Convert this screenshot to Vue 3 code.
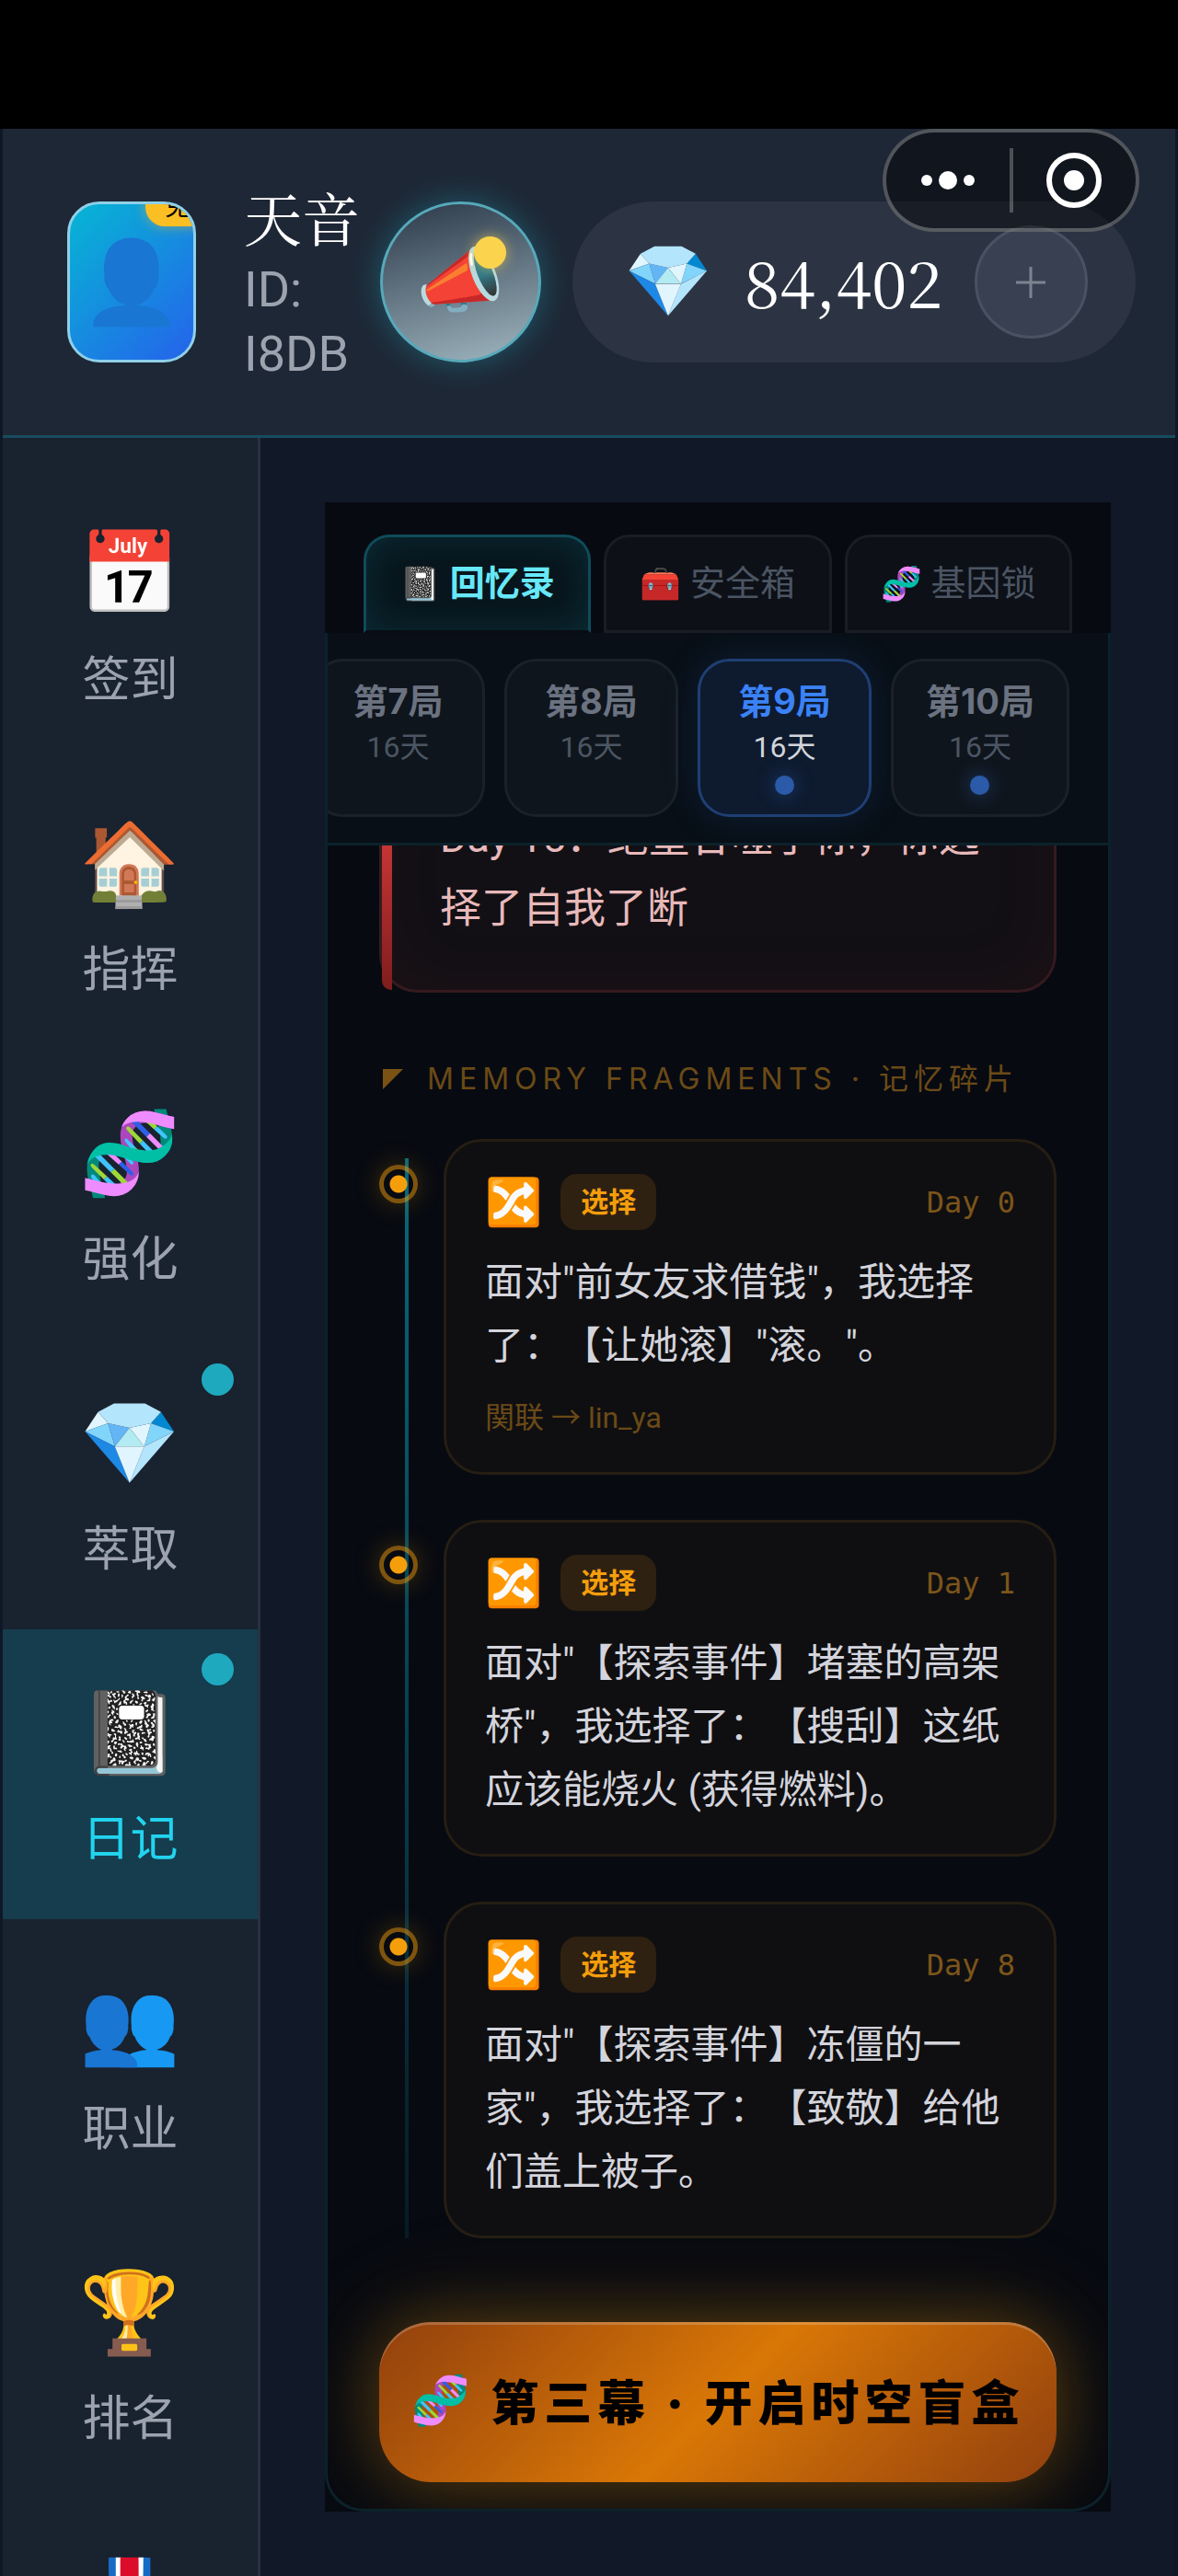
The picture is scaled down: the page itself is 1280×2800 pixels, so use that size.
<script setup>
import { ref } from 'vue';

const menu = [
    { icon: '📅', label: '签到' },
    { icon: '🏠', label: '指挥' },
    { icon: '🧬', label: '强化' },
    { icon: '💎', label: '萃取', dot: true },
    { icon: '📓', label: '日记', dot: true },
    { icon: '👥', label: '职业' },
    { icon: '🏆', label: '排名' },
    { icon: '🎖️', label: '' },
];
const activeMenu = ref('日记');

const tabs = [
    { icon: '📓', label: '回忆录' },
    { icon: '🧰', label: '安全箱' },
    { icon: '🧬', label: '基因锁' },
];
const activeTab = ref('回忆录');

const rounds = [
    { nr: 7, days: 16 },
    { nr: 8, days: 16 },
    { nr: 9, days: 16, dot: true },
    { nr: 10, days: 16, dot: true },
];
const activeRound = ref(9);

const fragments = [
    { day: 0, text: '面对"前女友求借钱"，我选择了：【让她滚】"滚。"。', link: 'lin_ya' },
    { day: 1, text: '面对"【探索事件】堵塞的高架桥"，我选择了：【搜刮】这纸应该能烧火 (获得燃料)。' },
    { day: 8, text: '面对"【探索事件】冻僵的一家"，我选择了：【致敬】给他们盖上被子。' },
];
</script>

<template>
    <div class="screen">
        <div class="statusbar"></div>
        <div class="app">
            <div class="capsule">
                <button class="capsule-btn" aria-label="更多">
                    <svg width="58" height="20" viewBox="0 0 58 20" fill="#fff">
                        <circle cx="6" cy="10" r="6" />
                        <circle cx="29" cy="10" r="10" />
                        <circle cx="52" cy="10" r="6" />
                    </svg>
                </button>
                <span class="capsule-line"></span>
                <button class="capsule-btn" aria-label="关闭">
                    <svg width="60" height="60" viewBox="0 0 60 60">
                        <circle cx="30" cy="30" r="27" fill="none" stroke="#fff" stroke-width="6" />
                        <circle cx="30" cy="30" r="11" fill="#fff" />
                    </svg>
                </button>
            </div>

            <header class="header">
                <div class="avatar">
                    <span class="avatar-icon">👤</span>
                    <span class="avatar-badge">免</span>
                </div>
                <div class="user">
                    <div class="user-name">天音</div>
                    <div class="user-id">ID: I8DB</div>
                </div>
                <button class="horn" aria-label="公告">
                    <span class="horn-icon">📣</span>
                    <span class="horn-dot"></span>
                </button>
                <div class="gems">
                    <span class="gems-icon">💎</span>
                    <span class="gems-value">84,402</span>
                    <button class="gems-add" aria-label="充值">
                        <svg width="32" height="34" viewBox="0 0 32 34" stroke="#7d8491" stroke-width="3">
                            <path d="M16 0V34M0 17H32" />
                        </svg>
                    </button>
                </div>
            </header>

            <div class="body">
                <nav class="sidebar">
                    <button v-for="m in menu" :key="m.icon" class="item" :class="{ active: m.label === activeMenu }"
                        @click="activeMenu = m.label">
                        <span class="item-icon">{{ m.icon }}</span>
                        <span class="item-label">{{ m.label }}</span>
                        <span v-if="m.dot" class="item-dot"></span>
                    </button>
                </nav>

                <main class="main">
                    <div class="panel">
                        <div class="tabs">
                            <button v-for="t in tabs" :key="t.label" class="tab" :class="{ active: t.label === activeTab }"
                                @click="activeTab = t.label">
                                <span>{{ t.icon }}</span> {{ t.label }}
                            </button>
                        </div>

                        <div class="diary">
                            <div class="rounds">
                                <button v-for="r in rounds" :key="r.nr" class="round" :class="{ active: r.nr === activeRound }"
                                    @click="activeRound = r.nr">
                                    <span class="round-nr">第{{ r.nr }}局</span>
                                    <span class="round-days">{{ r.days }}天</span>
                                    <span v-if="r.dot" class="round-dot"></span>
                                </button>
                            </div>

                            <div class="scroller">
                                <div class="ending">Day 15：绝望吞噬了你，你选择了自我了断</div>

                                <h2 class="heading">
                                    <svg width="22" height="22" viewBox="0 0 22 22"><path d="M0 0H22L0 22Z" fill="#7a5213" /></svg>
                                    MEMORY FRAGMENTS · 记忆碎片
                                </h2>

                                <div class="timeline">
                                    <div v-for="f in fragments" :key="f.day" class="row">
                                        <span class="node"></span>
                                        <article class="card">
                                            <div class="card-head">
                                                <span class="card-icon">🔀</span>
                                                <span class="card-tag">选择</span>
                                                <span class="card-day">Day {{ f.day }}</span>
                                            </div>
                                            <p class="card-text">{{ f.text }}</p>
                                            <p v-if="f.link" class="card-link">関联 → {{ f.link }}</p>
                                        </article>
                                    </div>
                                </div>
                            </div>

                            <div class="footer">
                                <button class="open-box"><span class="open-icon">🧬</span>第三幕 · 开启时空盲盒</button>
                            </div>
                        </div>
                    </div>
                </main>
            </div>
        </div>
    </div>
</template>

<style>
body {
    background: #111827;
}
</style>

<style scoped>
* {
    box-sizing: border-box;
}

button {
    font: inherit;
    color: inherit;
    background: none;
    border: 0;
    padding: 0;
    margin: 0;
    cursor: pointer;
}

p,
h2 {
    margin: 0;
}

.screen {
    display: flex;
    flex-direction: column;
    height: 100vh;
    overflow: hidden;
    background: #0f1726;
    font-family: Roboto, "Noto Sans CJK SC", "Noto Color Emoji", sans-serif;
    text-spacing-trim: space-all;
}

.statusbar {
    flex: none;
    height: 140px;
    background: #000;
}

.app {
    position: relative;
    flex: 1;
    min-height: 0;
    display: flex;
    flex-direction: column;
    margin: 0 3px;
    background: #111827;
}

/* Kapsel oben rechts */
.capsule {
    position: absolute;
    top: 0;
    right: 39px;
    z-index: 5;
    display: flex;
    align-items: center;
    width: 279px;
    height: 112px;
    border: 4px solid rgba(255, 255, 255, 0.27);
    border-radius: 56px;
    background: rgba(0, 0, 0, 0.42);
}

.capsule-btn {
    flex: 1;
    display: flex;
    align-items: center;
    justify-content: center;
}

.capsule-line {
    width: 4px;
    height: 70px;
    background: rgba(255, 255, 255, 0.25);
}

/* Kopfzeile */
.header {
    flex: none;
    display: flex;
    align-items: center;
    height: 336px;
    padding: 0 43px 0 70px;
    background: #1e2735;
    border-bottom: 3px solid #174c5e;
}

.avatar {
    position: relative;
    flex: none;
    display: flex;
    align-items: center;
    justify-content: center;
    width: 140px;
    height: 175px;
    border: 3px solid #8fd0e8;
    border-radius: 35px;
    overflow: hidden;
    background: linear-gradient(135deg, #06b6d4, #2563eb);
}

.avatar-icon {
    font-size: 88px;
    line-height: 1;
}

.avatar-badge {
    position: absolute;
    top: -18px;
    right: -18px;
    width: 70px;
    height: 42px;
    padding-left: 21px;
    border-radius: 21px;
    background: #fbbf24;
    box-shadow: 0 0 14px rgba(251, 191, 36, 0.5);
    color: #000;
    font-size: 28px;
    line-height: 42px;
}

.user {
    width: 148px;
    margin-left: 52px;
    padding-top: 6px;
}

.user-name {
    color: #fff;
    font-family: "Noto Serif CJK SC", "Noto Sans CJK SC", serif;
    font-size: 63px;
    line-height: 70px;
    white-space: nowrap;
}

.user-id {
    width: 120px;
    margin-top: 10px;
    color: #9ca3af;
    font-size: 54px;
    line-height: 70px;
}

.horn {
    position: relative;
    flex: none;
    width: 175px;
    height: 175px;
    border: 3px solid #56a9ba;
    border-radius: 50%;
    background: linear-gradient(165deg, #2b3848, #9fb6c0);
    box-shadow: 0 0 35px rgba(34, 211, 238, 0.3);
}

.horn-icon {
    font-size: 77px;
    line-height: 1;
}

.horn-dot {
    position: absolute;
    top: 35px;
    right: 35px;
    width: 35px;
    height: 35px;
    border-radius: 50%;
    background: #fcd34d;
    box-shadow: 0 0 14px rgba(252, 211, 77, 0.6);
}

.gems {
    flex: 1;
    display: flex;
    align-items: center;
    justify-content: space-between;
    height: 175px;
    margin-left: 34px;
    padding: 0 52px 0 56px;
    border-radius: 88px;
    background: #2c3443;
}

.gems-icon {
    font-size: 77px;
    line-height: 1;
}

.gems-value {
    padding-bottom: 4px;
    color: #fff;
    font-family: "Noto Serif CJK SC", "Liberation Serif", serif;
    font-size: 70px;
    line-height: 1;
}

.gems-add {
    display: flex;
    align-items: center;
    justify-content: center;
    width: 123px;
    height: 123px;
    border: 3px solid #4a5262;
    border-radius: 50%;
    background: #394051;
}

/* Seitenleiste */
.body {
    flex: 1;
    min-height: 0;
    display: flex;
}

.sidebar {
    flex: none;
    width: 280px;
    padding-top: 35px;
    overflow: hidden;
    background: #19222f;
    border-right: 3px solid #28313f;
}

.item {
    position: relative;
    display: flex;
    flex-direction: column;
    align-items: center;
    width: 100%;
    height: 315px;
    padding-top: 64px;
    color: #9ca3af;
}

.item.active {
    background: #153d4e;
    color: #22d3ee;
}

.item-icon {
    font-size: 88px;
    line-height: 98px;
}

.item-label {
    margin-top: 32px;
    font-size: 52px;
    line-height: 70px;
}

.item-dot {
    position: absolute;
    top: 26px;
    right: 26px;
    width: 35px;
    height: 35px;
    border-radius: 50%;
    background: #1fa9bf;
}

/* Tagebuch */
.main {
    flex: 1;
    min-width: 0;
    padding: 70px;
    background: #111827;
}

.panel {
    display: flex;
    flex-direction: column;
    height: 100%;
    background: #070a11;
}

.tabs {
    display: flex;
    gap: 14px;
    padding: 35px 42px 0;
}

.tab {
    flex: 1;
    height: 107px;
    padding-bottom: 8px;
    border: 3px solid #1a1d24;
    border-radius: 28px 28px 0 0;
    background: #0d1017;
    color: #4b5563;
    font-size: 38px;
    white-space: nowrap;
}

.tab span {
    font-size: 36px;
}

.tab.active {
    border-color: #0f4c5a;
    border-bottom-color: #080d14;
    background: #08151c;
    box-shadow: inset 0 0 42px rgba(34, 211, 238, 0.13);
    color: #67e8f9;
    font-weight: 700;
}

.diary {
    flex: 1;
    min-height: 0;
    display: flex;
    flex-direction: column;
    border: 3px solid #0c222b;
    border-top: 0;
    border-radius: 0 0 42px 42px;
    overflow: hidden;
}

.rounds {
    display: flex;
    justify-content: flex-end;
    gap: 21px;
    padding: 28px 42px 28px 0;
    overflow: hidden;
    background: #080f16;
    border-bottom: 3px solid #0c222b;
}

.round {
    flex: none;
    display: flex;
    flex-direction: column;
    align-items: center;
    min-width: 189px;
    height: 172px;
    padding: 18px 35px 0;
    border: 3px solid #1b2128;
    border-radius: 35px;
    background: #0f151c;
}

.round.active {
    border-color: #1f3f74;
    background: #0e1a2e;
    box-shadow: 0 0 42px rgba(59, 130, 246, 0.15);
}

.round-nr {
    color: #6b7280;
    font-family: Inter, "Noto Sans CJK SC", sans-serif;
    font-size: 38px;
    font-weight: 700;
    line-height: 50px;
}

.round-days {
    color: #4b5563;
    font-size: 32px;
    line-height: 50px;
}

.active .round-nr {
    color: #3b82f6;
}

.active .round-days {
    color: #d1d5db;
}

.round-dot {
    width: 21px;
    height: 21px;
    margin-top: 6px;
    border-radius: 50%;
    background: #2a5aa8;
    box-shadow: 0 0 21px rgba(59, 130, 246, 0.4);
}

.scroller {
    flex: 1;
    min-height: 0;
    display: flex;
    flex-direction: column;
    justify-content: flex-end;
    padding: 0 56px 63px;
    overflow: hidden;
}

.ending {
    position: relative;
    flex: none;
    padding: 49px 49px 50px 63px;
    border: 3px solid #351a20;
    border-radius: 42px;
    background: #121015;
    box-shadow: inset 0 0 84px rgba(239, 68, 68, 0.05);
    color: #e8b9b9;
    font-size: 45px;
    line-height: 77px;
}

.ending::before {
    content: "";
    position: absolute;
    top: 0;
    bottom: 0;
    left: 0;
    width: 11px;
    border-radius: 10px 0 0 10px;
    background: linear-gradient(#ef4444, #7f1d1d);
}

.heading {
    flex: none;
    display: flex;
    align-items: center;
    gap: 26px;
    margin: 70px 0 42px;
    padding-left: 4px;
    color: #6b4a17;
    font-family: Inter, "Noto Sans CJK SC", sans-serif;
    font-size: 32px;
    font-weight: 400;
    letter-spacing: 6px;
    line-height: 47px;
    white-space: nowrap;
}

.timeline {
    position: relative;
    flex: none;
    display: flex;
    flex-direction: column;
    gap: 49px;
}

.timeline::before {
    content: "";
    position: absolute;
    top: 21px;
    bottom: 0;
    left: 28px;
    width: 4px;
    background: linear-gradient(rgba(6, 182, 212, 0.55), rgba(6, 182, 212, 0.1));
}

.row {
    position: relative;
    display: flex;
    align-items: flex-start;
    gap: 28px;
}

.node {
    flex: none;
    width: 42px;
    height: 42px;
    margin-top: 28px;
    border: 5px solid rgba(245, 158, 11, 0.5);
    border-radius: 50%;
    background: radial-gradient(circle, #f59e0b 9px, transparent 10px);
    box-shadow: 0 0 28px rgba(245, 158, 11, 0.25);
}

.card {
    flex: 1;
    min-width: 0;
    padding: 35px 42px;
    border: 3px solid #261e13;
    border-radius: 42px;
    background: #0f0f11;
}

.card-head {
    display: flex;
    align-items: center;
    height: 61px;
}

.card-icon {
    font-size: 50px;
    line-height: 1;
}

.card-tag {
    margin-left: 20px;
    padding: 0 22px;
    border-radius: 18px;
    background: #2e2112;
    color: #f59e0b;
    font-size: 30px;
    font-weight: 700;
    line-height: 61px;
}

.card-day {
    margin-left: auto;
    color: #7d551a;
    font-family: "DejaVu Sans Mono", monospace;
    font-size: 32px;
}

.card-text {
    margin-top: 22px;
    color: #d4d4dc;
    font-size: 42px;
    line-height: 69px;
}

.card-link {
    margin-top: 20px;
    color: #6b4a17;
    font-size: 32px;
    line-height: 48px;
}

.footer {
    flex: none;
    padding: 28px 56px 29px;
}

.open-box {
    display: flex;
    align-items: center;
    justify-content: center;
    width: 100%;
    height: 174px;
    padding-bottom: 6px;
    border-radius: 56px;
    background: linear-gradient(135deg, #92400e, #d97706 50%, #92400e);
    box-shadow: 0 0 70px rgba(245, 158, 11, 0.3), 0 0 140px rgba(245, 158, 11, 0.12), inset 0 3px 0 rgba(255, 255, 255, 0.2);
    color: #000;
    font-family: Inter, "Noto Sans CJK SC", "Noto Color Emoji", sans-serif;
    font-size: 52px;
    font-weight: 900;
    letter-spacing: 6px;
    white-space: nowrap;
}

.open-icon {
    margin-right: 16px;
    font-size: 52px;
}
</style>
